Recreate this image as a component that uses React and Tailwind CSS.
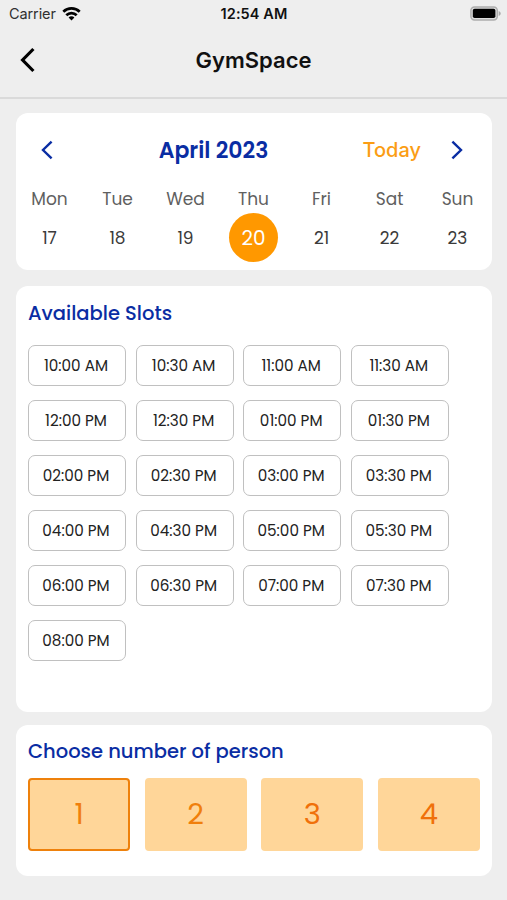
const DAYS = [
  { name: 'Mon', date: 17 },
  { name: 'Tue', date: 18 },
  { name: 'Wed', date: 19 },
  { name: 'Thu', date: 20 },
  { name: 'Fri', date: 21 },
  { name: 'Sat', date: 22 },
  { name: 'Sun', date: 23 },
]

const SLOTS = [
  '10:00 AM', '10:30 AM', '11:00 AM', '11:30 AM',
  '12:00 PM', '12:30 PM', '01:00 PM', '01:30 PM',
  '02:00 PM', '02:30 PM', '03:00 PM', '03:30 PM',
  '04:00 PM', '04:30 PM', '05:00 PM', '05:30 PM',
  '06:00 PM', '06:30 PM', '07:00 PM', '07:30 PM',
  '08:00 PM',
]

function StatusBar() {
  return (
    <div className="grid grid-cols-3 items-center h-[27px] pl-[9px] pr-[6px] text-[14.5px] leading-none">
      <div className="flex items-center gap-[6px] text-[#303030]">
        <span className="pt-[2px] tracking-[-0.1px]">Carrier</span>
        <svg className="w-[19px] h-[14px]" viewBox="0 0 19 14" fill="none" stroke="#000" strokeWidth="2.7">
          <path d="M1.3 4.8a11.7 11.7 0 0 1 16.4 0" />
          <path d="M4.3 8.2a7.4 7.4 0 0 1 10.4 0" />
          <path d="M9.5 13.4 6.6 10.6a4 4 0 0 1 5.8 0Z" fill="#000" stroke="none" />
        </svg>
      </div>
      <span className="pt-[2px] pr-[2px] text-center font-semibold text-[#111] tracking-[0.1px] whitespace-nowrap">12:54 AM</span>
      <svg className="justify-self-end w-[31px] h-[15px]" viewBox="0 0 31 15">
        <rect x="0.9" y="0.9" width="26.4" height="13" rx="3.6" fill="#ddd" stroke="#adadad" strokeWidth="1.5" />
        <rect x="2.8" y="2.8" width="22.6" height="9.2" rx="1.8" fill="#000" />
        <path d="M28.7 4.9c1.2.4 2 1.4 2 2.5s-.8 2.1-2 2.5Z" fill="#a9a9a9" />
      </svg>
    </div>
  )
}

function Header() {
  return (
    <header className="grid grid-cols-[60px_1fr_60px] items-center h-[72px] pb-[4px] border-b-2 border-[#dadada]">
      <button className="pl-[20px]">
        <svg className="w-[16px] h-[26px]" viewBox="0 0 16 26" fill="none" stroke="#000" strokeWidth="3.2">
          <path d="M13.4 2 2.6 13l10.8 11" />
        </svg>
      </button>
      <h1 className="text-center text-[22px] font-semibold text-[#111]">GymSpace</h1>
    </header>
  )
}

function Calendar() {
  return (
    <section className="h-[157px] bg-white rounded-[12px]">
      <div className="grid grid-cols-[103px_1fr_183px] items-center h-[74px]">
        <svg className="ml-[25px] w-[12px] h-[20px]" viewBox="0 0 12 20" fill="none" stroke="#0a2da3" strokeWidth="2.4">
          <path d="M10.6 1.6 2 10l8.6 8.4" />
        </svg>
        <h2 className="pt-px -mx-4 text-center text-[22px] font-semibold text-[#0a2da3] whitespace-nowrap">April 2023</h2>
        <div className="flex items-center justify-between pl-[54px] pr-[29px]">
          <span className="font-['Inter',sans-serif] text-[20px] font-medium text-[#fb9d14]">Today</span>
          <svg className="w-[12px] h-[20px]" viewBox="0 0 12 20" fill="none" stroke="#0a2da3" strokeWidth="2.4">
            <path d="M1.4 1.6 10 10l-8.6 8.4" />
          </svg>
        </div>
      </div>
      <div className="grid grid-cols-7">
        {DAYS.map(day => (
          <div key={day.date} className="flex flex-col items-center">
            <span className="h-[26px] leading-[24px] text-[17px] text-[#606060]">{day.name}</span>
            {day.date === 20 ? (
              <span className="flex items-center justify-center w-[49px] h-[49px] pt-px rounded-full bg-[#ff9800] text-white text-[20px]">
                {day.date}
              </span>
            ) : (
              <span className="flex items-center justify-center h-[49px] pt-[2px] text-[17px] text-[#3b3b3b]">{day.date}</span>
            )}
          </div>
        ))}
      </div>
    </section>
  )
}

function Slots() {
  return (
    <section className="h-[426px] mt-[16px] pt-[12px] px-[12.5px] bg-white rounded-[12px]">
      <h2 className="h-[47px] leading-[31px] text-[19.5px] font-medium text-[#0a2da3]">Available Slots</h2>
      <div className="grid grid-cols-[repeat(4,98px)] gap-x-[9.6px] gap-y-[14px]">
        {SLOTS.map(slot => (
          <button
            key={slot}
            className="h-[41px] pt-px pr-[2px] rounded-[7px] border border-[#c0c0c0] text-[15.2px] text-[#222] whitespace-nowrap"
          >
            {slot}
          </button>
        ))}
      </div>
    </section>
  )
}

function Persons() {
  return (
    <section className="h-[151px] mt-[13px] pt-[12px] pl-[12.5px] pr-[11.5px] bg-white rounded-[12px]">
      <h2 className="h-[41px] leading-[30px] text-[19.5px] font-medium text-[#0a2da3]">Choose number of person</h2>
      <div className="grid grid-cols-4 gap-x-[14.6px]">
        {[1, 2, 3, 4].map(count => (
          <button
            key={count}
            className={`h-[73px] rounded-[4px] border-2 bg-[#ffd699] text-[29px] ${
              count === 1 ? 'border-[#ee810c]' : 'border-[#ffd699]'
            } ${count > 2 ? 'text-[#f0700a]' : 'text-[#f07f0c]'}`}
          >
            {count}
          </button>
        ))}
      </div>
    </section>
  )
}

export default function App() {
  return (
    <div className="w-[507px] h-[900px] bg-[#eeeeee] font-['Inter',sans-serif] overflow-hidden">
      <StatusBar />
      <Header />
      <main className="px-[15.5px] pt-[14px] font-['Poppins','Inter',sans-serif]">
        <Calendar />
        <Slots />
        <Persons />
      </main>
    </div>
  )
}
